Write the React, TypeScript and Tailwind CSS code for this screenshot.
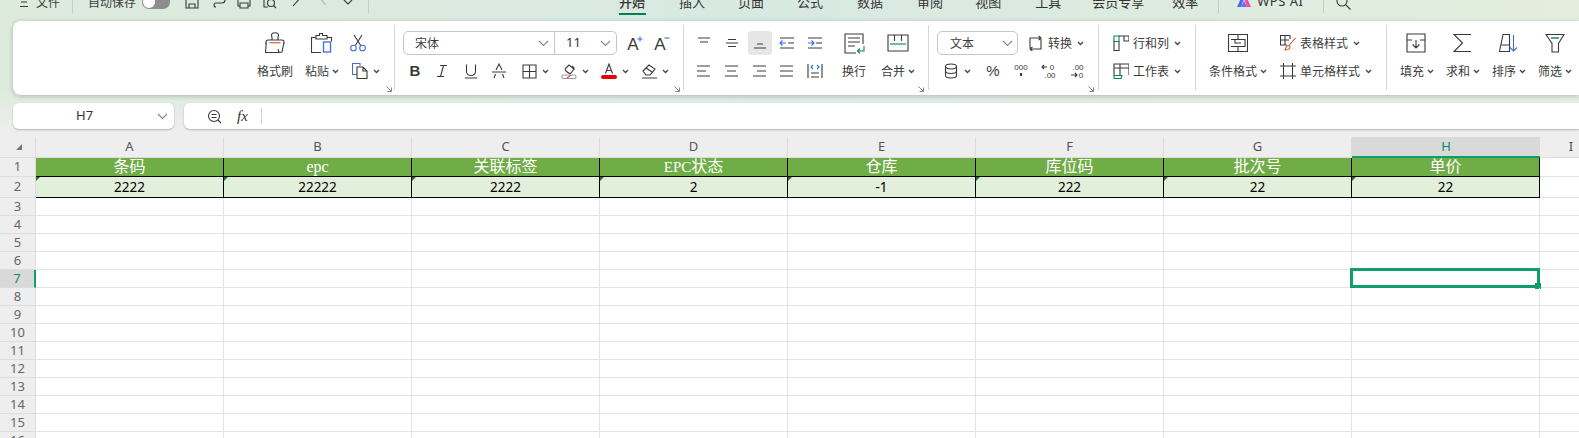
import type { ReactNode } from "react";

const D = "#3a3a3a";
const BLUE = "#3b6fe0";
const ORANGE = "#c5562a";
const GREEN = "#10805a";

function Ic({ w = 16, h = 16, className = "", children }: { w?: number; h?: number; className?: string; children: ReactNode }) {
  return (
    <svg width={w} height={h} viewBox={`0 0 ${w} ${h}`} fill="none" stroke={D} strokeWidth="1.1" className={`flex-none ${className}`}>
      {children}
    </svg>
  );
}

function Chev({ className = "" }: { className?: string }) {
  return (
    <svg width="7" height="5" viewBox="0 0 7 5" fill="none" stroke="#444" strokeWidth="1.3" className={`flex-none ${className}`}>
      <path d="M1 1l2.5 2.5L6 1" />
    </svg>
  );
}

function ComboChev({ className = "" }: { className?: string }) {
  return (
    <svg width="11" height="7" viewBox="0 0 11 7" fill="none" stroke="#888" strokeWidth="1.1" className={`flex-none ${className}`}>
      <path d="M1 1l4.5 4.5L10 1" />
    </svg>
  );
}

function Label({ children, className = "" }: { children: ReactNode; className?: string }) {
  return <span className={`flex-none whitespace-nowrap text-[12px] leading-[24px] text-[#3c3c3c] ${className}`}>{children}</span>;
}

function Row({ children }: { children: ReactNode }) {
  return <div className="flex h-[24px] items-center">{children}</div>;
}

function Corner({ className = "" }: { className?: string }) {
  return (
    <svg width="6" height="6" viewBox="0 0 6 6" fill="none" stroke="#777" strokeWidth="0.9" className={`absolute top-[65px] ${className}`}>
      <path d="M0.5 0.5l4.5 4.5M5.5 1.5v4h-4" />
    </svg>
  );
}

function Sep() {
  return <div className="mt-[4px] h-[65px] w-px flex-none bg-[#d6d6d6]" />;
}

function TopSep({ className = "" }: { className?: string }) {
  return <div className={`h-[22px] w-px flex-none bg-[#c3cfc6] ${className}`} />;
}

function Tab({ children, className = "" }: { children: ReactNode; className?: string }) {
  return <span className={`flex-none whitespace-nowrap text-[13px] text-[#333] ${className}`}>{children}</span>;
}

function TopBar() {
  return (
    <div className="h-[21px] overflow-hidden">
      <div className="-mt-[9px] flex h-[22px] items-center">
        <Ic w={8} h={14} className="ml-[20px]">
          <path d="M0 2h8M1 7h6M0 11.5h8" />
        </Ic>
        <Label className="ml-[8px]">文件</Label>
        <TopSep className="ml-[12px]" />
        <Label className="ml-[15px]">自动保存</Label>
        <div className="ml-[6px] flex h-[14px] w-[28px] flex-none items-center rounded-full bg-[#8c8c8c] pl-[1px]">
          <div className="h-[12px] w-[12px] rounded-full bg-white" />
        </div>
        <Ic w={14} h={14} className="ml-[15px]">
          <path d="M1 1h10l2 2v10H1zM4 13V9h6v4" />
        </Ic>
        <Ic w={14} h={14} className="ml-[13px]">
          <path d="M4 12a2 2 0 0 1 0-4h6a3 3 0 0 0 0-6H7" />
        </Ic>
        <Ic w={14} h={14} className="ml-[11px]">
          <path d="M3 4V1h8v3M3 11H1V4h12v7h-2M3 8h8v5H3z" />
        </Ic>
        <Ic w={14} h={14} className="ml-[12px]">
          <path d="M5 12H1V1h7M13 13l-2.5-2.5" />
          <circle cx="8" cy="8" r="3.5" />
        </Ic>
        <Ic w={10} h={14} className="ml-[16px]">
          <path d="M0 11L9 1" />
        </Ic>
        <Ic w={8} h={14} className="ml-[15px]">
          <path d="M0 1l8 9" stroke="#aab5ad" />
        </Ic>
        <Ic w={10} h={14} className="ml-[17px]">
          <path d="M1 5l4 4 4-4" />
        </Ic>
        <TopSep className="ml-[15px]" />
        <Tab className="relative ml-[250px] font-medium text-[#0a7d5a]">
          开始
          <span className="absolute -bottom-[3px] left-0 h-[2px] w-[27px] bg-[#0a7d5a]" />
        </Tab>
        <Tab className="ml-[34px]">插入</Tab>
        <Tab className="ml-[33px]">页面</Tab>
        <Tab className="ml-[33px]">公式</Tab>
        <Tab className="ml-[34px]">数据</Tab>
        <Tab className="ml-[34px]">审阅</Tab>
        <Tab className="ml-[32px]">视图</Tab>
        <Tab className="ml-[34px]">工具</Tab>
        <Tab className="ml-[31px]">会员专享</Tab>
        <Tab className="ml-[28px]">效率</Tab>
        <TopSep className="ml-[20px]" />
        <svg width="16" height="14" viewBox="0 0 16 14" className="ml-[17px] flex-none">
          <path d="M1 12L6 1h3L5 12z" fill="#4b6bf0" />
          <path d="M7 1h3l5 11h-4z" fill="#e84fa8" />
          <path d="M5 12l3-6 3 6z" fill="#8a5cf0" />
        </svg>
        <Tab className="ml-[5px] font-['Noto_Sans'] tracking-[0.5px]">WPS AI</Tab>
        <TopSep className="ml-[20px]" />
        <Ic w={15} h={15} className="ml-[12px]">
          <circle cx="6" cy="6" r="5" />
          <path d="M9.8 9.8L14.5 14.5" />
        </Ic>
      </div>
    </div>
  );
}

function TextIcon({ children, weight = 400, size = 15, x = 8, y = 13 }: { children: string; weight?: number; size?: number; x?: number; y?: number }) {
  return (
    <text x={x} y={y} textAnchor="middle" fontFamily="Liberation Sans, sans-serif" fontWeight={weight} fontSize={size} fill={D} stroke="none">
      {children}
    </text>
  );
}

function AlignLines({ short }: { short: "l" | "c" | "r" | "f" }) {
  const mid = { l: "M1 8h9", c: "M3 8h9", r: "M5 8h9", f: "M1 8h13" }[short];
  return (
    <Ic>
      <path d={`M1 3h13M1 13h13${mid}`} />
    </Ic>
  );
}

function Ribbon() {
  return (
    <div className="ml-[13px] flex h-[74px] rounded-l-[8px] bg-white shadow-[0_1px_5px_rgba(0,0,0,0.22)]">
      {/* clipboard */}
      <div className="relative w-[381px] flex-none pt-[10px]">
        <Row>
          <Ic w={20} h={22} className="ml-[252px]">
            <path d="M7 8V5.5L6.5 3.5a3.5 2.8 0 0 1 7 0L13 5.5V8" />
            <path d="M1 12V10.5Q1 8 3 8H17Q19 8 19 10.5V12" />
            <path d="M1.2 11L0.5 20.5H14L13 17M18.8 11L17 20L14 20.5" />
            <path d="M4.5 10.8h11" stroke={ORANGE} />
          </Ic>
          <Ic w={22} h={21} className="ml-[26px]">
            <path d="M10 19.5H0.5V4.5H5M16 4.5h4.5V8.5" />
            <path d="M5 6V2.5h3.5V0.5h3V2.5H16V6z" />
            <rect x="12.5" y="9" width="7" height="10" stroke={BLUE} strokeWidth="1.3" />
          </Ic>
          <Ic w={16} h={18} className="ml-[17px]">
            <path d="M5 12L12 1M11 12L4 1" />
            <circle cx="3.5" cy="14" r="2.8" stroke={BLUE} />
            <circle cx="12.5" cy="14" r="2.8" stroke={BLUE} />
          </Ic>
        </Row>
        <div className="h-[4px]" />
        <Row>
          <Label className="ml-[244px]">格式刷</Label>
          <Label className="ml-[12px]">粘贴</Label>
          <Chev className="ml-[3px]" />
          <Ic w={16} h={16} className="ml-[13px]">
            <path d="M5 11.5H0.5V0.5H8V3" stroke={BLUE} />
            <path d="M5 4h6l4 4v7.5H5zM11 4v4h4" />
          </Ic>
          <Chev className="ml-[5px]" />
        </Row>
        <Corner className="right-[2px]" />
      </div>
      <Sep />

      {/* font */}
      <div className="relative w-[288px] flex-none pt-[10px]">
        <Row>
          <div className="ml-[8px] flex h-[24px] w-[214px] flex-none rounded-[5px] border border-[#c6c6c6]">
            <div className="flex w-[151px] flex-none items-center justify-between border-r border-[#c6c6c6] pl-[11px] pr-[5px]">
              <Label>宋体</Label>
              <ComboChev />
            </div>
            <div className="flex flex-1 items-center justify-between pl-[11px] pr-[5px]">
              <span className="font-['Noto_Sans'] text-[13px] text-[#333]">11</span>
              <ComboChev />
            </div>
          </div>
          <Ic className="ml-[10px]">
            <TextIcon size={17} x={6} y={15}>A</TextIcon>
            <path d="M10.5 4h5M13 1.5v5" stroke={BLUE} />
          </Ic>
          <Ic className="ml-[11px]">
            <TextIcon size={17} x={6} y={15}>A</TextIcon>
            <path d="M10.5 3h5" stroke={BLUE} />
          </Ic>
        </Row>
        <div className="h-[4px]" />
        <Row>
          <Ic className="ml-[12px]">
            <TextIcon weight={700}>B</TextIcon>
          </Ic>
          <Ic className="ml-[11px]">
            <path d="M6 2.5h7M3 13.5h7M9.5 2.5l-3 11" />
          </Ic>
          <Ic className="ml-[13px]">
            <path d="M3.5 1.5v7a4.5 4 0 0 0 9 0v-7M2 15h12" />
          </Ic>
          <Ic className="ml-[12px]">
            <path d="M5 7l3-6 3 6M1 9h14M4.5 11l-1.5 4M11.5 11l1.5 4" />
          </Ic>
          <Ic className="ml-[14px]">
            <path d="M2 2h13v13H2zM8.5 2v13M2 8.5h13" />
          </Ic>
          <Chev className="ml-[5px]" />
          <Ic className="ml-[12px]">
            <path d="M5 8c-2-2 0-3 1-4l2-2 5 4-3 4c-1 1-3 0-5-2zM11 3l2 2v2" />
            <rect x="1" y="12" width="14" height="3.5" rx="1.5" stroke="#999" />
            <path d="M6 15l4-3" stroke="#d9534f" />
          </Ic>
          <Chev className="ml-[5px]" />
          <div className="ml-[12px] flex h-[16px] w-[16px] flex-none flex-col items-center">
            <Ic w={16} h={11}>
              <path d="M4.5 10.5L8 1l3.5 9.5M5.5 7.5h5" />
            </Ic>
            <div className="mt-[1px] h-[4px] w-[16px] rounded-[2px] bg-[#e60000]" />
          </div>
          <Chev className="ml-[5px]" />
          <Ic className="ml-[12px]">
            <path d="M2 8l6-6 6 4-5 6H5zM5 5l6 4M1 15h15" />
          </Ic>
          <Chev className="ml-[5px]" />
        </Row>
        <Corner className="right-[3px]" />
      </div>
      <Sep />

      {/* alignment */}
      <div className="relative w-[244px] flex-none pt-[10px]">
        <Row>
          <Ic className="ml-[12px]">
            <path d="M2 3h12M4 7h8" />
          </Ic>
          <Ic className="ml-[12px]">
            <path d="M4 4.5h8M2 8h12M4 11.5h8" />
          </Ic>
          <div className="ml-[8px] flex h-[24px] w-[24px] flex-none items-center justify-center rounded-[4px] bg-[#e6e6e6]">
            <Ic>
              <path d="M5 9h6M2 13h12" />
            </Ic>
          </div>
          <Ic className="ml-[7px]">
            <path d="M1 3h14M9 8h6M1 13h14" />
            <path d="M7 8H1M3.5 5.5L1 8l2.5 2.5" stroke={BLUE} />
          </Ic>
          <Ic className="ml-[12px]">
            <path d="M1 3h14M9 8h6M1 13h14" />
            <path d="M1 8h6M4.5 5.5L7 8l-2.5 2.5" stroke={BLUE} />
          </Ic>
          <Ic w={22} h={22} className="ml-[20px]">
            <path d="M20 12V2H2v19h11M5 6h12M5 10h12M5 14h7" />
            <path d="M21 14v5h-6M17 16.5L14.5 19l2.5 2.5" stroke={GREEN} />
          </Ic>
          <Ic w={22} h={20} className="ml-[22px]">
            <path d="M1 2h20v16H1zM7.5 2v6M14.5 2v6" />
            <path d="M3 11h16" stroke={GREEN} />
          </Ic>
        </Row>
        <div className="h-[4px]" />
        <Row>
          <div className="ml-[12px]">
            <AlignLines short="l" />
          </div>
          <div className="ml-[12px]">
            <AlignLines short="c" />
          </div>
          <div className="ml-[12px]">
            <AlignLines short="r" />
          </div>
          <div className="ml-[11px]">
            <AlignLines short="f" />
          </div>
          <Ic className="ml-[12px]">
            <path d="M1 1v14M15 1v14M4 10h8M4 14h8" />
            <path d="M6 2L4 4l2 2M10 2l2 2-2 2" stroke={BLUE} />
          </Ic>
          <Label className="ml-[19px]">换行</Label>
          <Label className="ml-[15px]">合并</Label>
          <Chev className="ml-[3px]" />
        </Row>
        <Corner className="right-[4px]" />
      </div>
      <Sep />

      {/* number */}
      <div className="relative w-[169px] flex-none pt-[10px]">
        <Row>
          <div className="ml-[8px] flex h-[24px] w-[81px] flex-none items-center justify-between rounded-[5px] border border-[#c6c6c6] pl-[12px] pr-[4px]">
            <Label>文本</Label>
            <ComboChev />
          </div>
          <Ic w={17} h={16} className="ml-[9px]">
            <path d="M3 13V3h11M11.5 0.8L14 3l-2.5 2.2M14 4v10H3M5.5 11.8L3 14l2.5 2.2" />
          </Ic>
          <Label className="ml-[4px]">转换</Label>
          <Chev className="ml-[5px]" />
        </Row>
        <div className="h-[4px]" />
        <Row>
          <Ic w={14} h={16} className="ml-[15px]">
            <ellipse cx="7" cy="3.5" rx="5.5" ry="2.5" />
            <path d="M1.5 3.5v9c0 1.5 2.5 2.5 5.5 2.5s5.5-1 5.5-2.5v-9M1.5 8c0 1.5 2.5 2.5 5.5 2.5s5.5-1 5.5-2.5" />
          </Ic>
          <Chev className="ml-[6px]" />
          <Ic className="ml-[14px]">
            <TextIcon size={15}>%</TextIcon>
          </Ic>
          <Ic className="ml-[12px]">
            <TextIcon size={8} y={7}>000</TextIcon>
            <path d="M8 10v3" strokeWidth="2" />
          </Ic>
          <Ic className="ml-[12px]">
            <TextIcon size={8} x={11} y={7}>0</TextIcon>
            <TextIcon size={8} x={9} y={15}>.00</TextIcon>
            <path d="M6 4H1M3 2L1 4l2 2" />
          </Ic>
          <Ic className="ml-[12px]">
            <TextIcon size={8} x={9} y={7}>.00</TextIcon>
            <TextIcon size={8} x={12} y={15}>0</TextIcon>
            <path d="M2 12h6M6 10l2 2-2 2" />
          </Ic>
        </Row>
        <Corner className="right-[4px]" />
      </div>
      <Sep />

      {/* rows and sheets */}
      <div className="w-[96px] flex-none pt-[10px]">
        <Row>
          <Ic className="ml-[14px]">
            <path d="M1 1h5v5.5H1z" stroke={GREEN} />
            <path d="M1 6.5v9h5v-9M6 1h10v5h-5V1" />
          </Ic>
          <Label className="ml-[4px]">行和列</Label>
          <Chev className="ml-[5px]" />
        </Row>
        <div className="h-[4px]" />
        <Row>
          <Ic className="ml-[14px]">
            <path d="M1 12V1h15v11M1 5h15M7 1v11" />
            <path d="M1 12.5v3h7l1-3z" stroke={GREEN} />
          </Ic>
          <Label className="ml-[4px]">工作表</Label>
          <Chev className="ml-[5px]" />
        </Row>
      </div>
      <Sep />

      {/* styles */}
      <div className="w-[190px] flex-none pt-[10px]">
        <Row>
          <Ic w={20} h={18} className="ml-[32px]">
            <path d="M3 0.5H0.5V17.5H3M17 0.5H19.5V17.5H17M3 0.5H17M3 17.5H17" />
            <path d="M3 5.500H17V12.500H3M7 5.500V9H13M10 12.500V17.500M10 0.500V5.500" />
          </Ic>
          <Ic className="ml-[32px]">
            <path d="M7 10H0.5V0.5H10V4M0.5 5H9M5 0.5V10" />
            <path d="M15.5 3l-6 7M8 10.5c2 0 2.5 1.500 1.500 3s-3 1.500-4.500 1.500c1-1.500 1-4.500 3-4.500z" stroke={ORANGE} />
          </Ic>
          <Label className="ml-[4px]">表格样式</Label>
          <Chev className="ml-[5px]" />
        </Row>
        <div className="h-[4px]" />
        <Row>
          <Label className="ml-[13px]">条件格式</Label>
          <Chev className="ml-[3px]" />
          <Ic className="ml-[13px]">
            <path d="M3.500 0v16M12.500 0v16M0 3h16M0 13h16" />
          </Ic>
          <Label className="ml-[4px]">单元格样式</Label>
          <Chev className="ml-[5px]" />
        </Row>
      </div>
      <Sep />

      {/* editing */}
      <div className="w-[192px] flex-none pt-[10px]">
        <Row>
          <Ic w={20} h={20} className="ml-[19px]">
            <path d="M1 1h18v18H1zM1 7h5M14 7h5M10 7v8M6.500 11.500L10 15l3.500-3.500" />
          </Ic>
          <Ic w={20} h={20} className="ml-[26px]">
            <path d="M19 1.500H2L10.500 10 2 18.500H19" />
          </Ic>
          <Ic w={20} h={20} className="ml-[26px]">
            <path d="M1.500 18.500L5 1.500H11.500V18.500zM3.500 12H11.500" />
            <path d="M15.500 2v16M12 14.500L15.500 18l3.500-3.500" stroke={BLUE} />
          </Ic>
          <Ic w={20} h={20} className="ml-[27px]">
            <path d="M1 1.500H19L13.500 10.500V19H7V10.500z" />
            <path d="M6 5h8" stroke={GREEN} strokeWidth="1.4" />
          </Ic>
        </Row>
        <div className="h-[4px]" />
        <Row>
          <Label className="ml-[13px]">填充</Label>
          <Chev className="ml-[3px]" />
          <Label className="ml-[12px]">求和</Label>
          <Chev className="ml-[3px]" />
          <Label className="ml-[12px]">排序</Label>
          <Chev className="ml-[3px]" />
          <Label className="ml-[12px]">筛选</Label>
          <Chev className="ml-[3px]" />
        </Row>
      </div>
    </div>
  );
}

function FormulaBar() {
  return (
    <div className="mt-[8px] flex h-[26px] pl-[13px]">
      <div className="flex w-[161px] flex-none items-center justify-between rounded-[6px] bg-white pl-[63px] pr-[6px] shadow-[0_1px_2px_rgba(0,0,0,0.25)]">
        <span className="font-['Noto_Sans'] text-[13px] text-[#333]">H7</span>
        <ComboChev />
      </div>
      <div className="ml-[10px] flex flex-1 items-center rounded-l-[6px] bg-white pl-[23px] shadow-[0_1px_2px_rgba(0,0,0,0.25)]">
        <Ic w={15} h={15}>
          <circle cx="7" cy="7" r="5.5" />
          <path d="M4.500 5.500h5M4.500 8.500h5M11 11l3 3" />
        </Ic>
        <span className="ml-[15px] font-['Liberation_Serif'] text-[15px] italic text-[#333]">fx</span>
        <div className="ml-[13px] h-[16px] w-px bg-[#d0d0d0]" />
      </div>
    </div>
  );
}

const COLS = ["A", "B", "C", "D", "E", "F", "G", "H"];
const HEADERS = ["条码", "epc", "关联标签", "EPC状态", "仓库", "库位码", "批次号", "单价"];
const VALUES = ["2222", "22222", "2222", "2", "-1", "222", "22", "22"];
const PLAIN_ROWS = [3, 4, 5, 6, 7, 8, 9, 10, 11, 12, 13, 14, 15, 16];

function RowNo({ n, active = false }: { n: number; active?: boolean }) {
  return (
    <div
      className={`flex items-center justify-center border-b border-[#dcdcdc] font-['Noto_Sans'] text-[13px] ${
        active ? "border-r-2 border-r-[#0f9d6e] bg-[#d9d9d9] text-[#0f8a64]" : "border-r bg-[#eeeeee] text-[#666]"
      }`}
    >
      {n}
    </div>
  );
}

function Sheet() {
  return (
    <div className="mt-[8px] grid grid-cols-[36px_repeat(8,188px)_62px] grid-rows-[21px_19px_21px_repeat(14,18px)] overflow-hidden bg-white">
      <div className="flex items-center justify-center border-b border-r border-[#dcdcdc] bg-[#eeeeee]">
        <svg width="6" height="6" viewBox="0 0 6 6" className="ml-[2px]">
          <path d="M6 0v6H0z" fill="#777" />
        </svg>
      </div>
      {COLS.map((c) => (
        <div
          key={c}
          className={`flex items-center justify-center font-['Noto_Sans'] text-[13px] ${
            c === "H"
              ? "border-b-2 border-[#0f9d6e] bg-[#d9d9d9] text-[#0f8a64]"
              : "border-b border-r border-[#dcdcdc] bg-[#eeeeee] text-[#555]"
          }`}
        >
          {c}
        </div>
      ))}
      <div className="flex items-center justify-center border-b border-[#dcdcdc] bg-[#eeeeee] font-['Noto_Sans'] text-[13px] text-[#555]">I</div>

      <RowNo n={1} />
      {HEADERS.map((t) => (
        <div
          key={t}
          className="flex items-center justify-center overflow-hidden border-b border-r border-black bg-[#70ad47] font-['Liberation_Serif','Noto_Sans_CJK_SC',serif] text-[16px] leading-none text-white"
        >
          {t === "EPC状态" ? (
            <span>
              <span className="text-[15px]">EPC</span>状态
            </span>
          ) : (
            t
          )}
        </div>
      ))}
      <div className="border-b border-[#e2e2e2]" />

      <RowNo n={2} />
      {VALUES.map((v, i) => (
        <div
          key={i}
          className="relative flex items-center justify-center border-b border-r border-black bg-[#e2efda] pt-px font-['Noto_Sans'] text-[13.5px] leading-none text-black"
        >
          <svg width="4" height="4" viewBox="0 0 4 4" className="absolute left-0 top-0">
            <path d="M0 0h4L0 4z" fill="#1a7a1a" />
          </svg>
          {v}
        </div>
      ))}
      <div className="border-b border-[#e2e2e2]" />

      {PLAIN_ROWS.map((n) => (
        <div key={n} className="contents">
          <RowNo n={n} active={n === 7} />
          {COLS.map((c) => (
            <div key={c} className="relative border-b border-r border-[#e4e4e4]">
              {n === 7 && c === "H" && (
                <div className="absolute -bottom-[1px] -left-[2px] -right-[1px] -top-[2px] border-[3px] border-[#0f9d6e]">
                  <div className="absolute -bottom-[4px] -right-[4px] h-[6px] w-[6px] bg-[#0f9d6e]" />
                </div>
              )}
            </div>
          ))}
          <div className="border-b border-[#e4e4e4]" />
        </div>
      ))}
    </div>
  );
}

export default function App() {
  return (
    <div className="h-[438px] w-[1579px] overflow-hidden bg-[#eeeeee] font-['Noto_Sans_CJK_SC','Noto_Sans',sans-serif]">
      <div className="h-[129px] bg-[linear-gradient(180deg,rgba(238,238,238,0)_70%,#eeeeee_100%),linear-gradient(90deg,#dcebdc,#d8e9e2_50%,#e3eedd)]">
        <TopBar />
        <Ribbon />
        <FormulaBar />
      </div>
      <Sheet />
    </div>
  );
}
